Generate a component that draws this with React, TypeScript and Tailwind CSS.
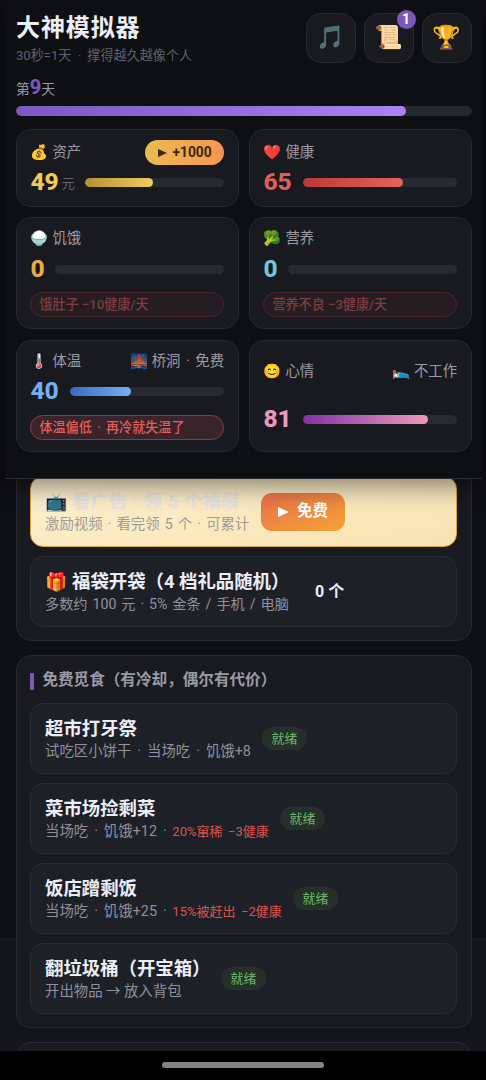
import type { ReactNode } from "react";
import clsx from "clsx";

const headerButtons = [
  { icon: "🎵", badge: 0 },
  { icon: "📜", badge: 1 },
  { icon: "🏆", badge: 0 },
];

const foraging = [
  { name: "超市打牙祭", desc: "试吃区小饼干 · 当场吃 · 饥饿+8", risk: "", width: "w-[207px] [word-spacing:2.4px]" },
  { name: "菜市场捡剩菜", desc: "当场吃 · 饥饿+12 ·", risk: "20%窜稀 −3健康", width: "w-[225px] [word-spacing:2.4px]" },
  { name: "饭店蹭剩饭", desc: "当场吃 · 饥饿+25 ·", risk: "15%被赶出 −2健康", width: "w-[238px] [word-spacing:2.4px]" },
  { name: "翻垃圾桶（开宝箱）", desc: "开出物品 → 放入背包", risk: "", width: "w-[166px]" },
];

function Emoji({ children, className }: { children: ReactNode; className?: string }) {
  return <span className={clsx("inline-block shrink-0 whitespace-nowrap", className)}>{children}</span>;
}

function Label({ icon, text }: { icon: string; text: string }) {
  return (
    <div className="flex items-center whitespace-nowrap text-[14.4px] leading-5 text-[#9a9ba6]">
      <Emoji className="mr-1 w-[18px] text-[14.4px]">{icon}</Emoji>
      {text}
    </div>
  );
}

function Meter({ value, fill }: { value: number; fill: string }) {
  return (
    <div className="h-[9px] flex-1 overflow-hidden rounded-full bg-[#262a33]">
      <div className={clsx("h-full rounded-full", fill)} style={{ width: `${value}%` }} />
    </div>
  );
}

function Warning({ text, active }: { text: string; active?: boolean }) {
  return (
    <div
      className={clsx(
        "flex h-[25px] items-center rounded-full border pl-2 text-[13.1px] font-medium whitespace-pre",
        active
          ? "border-[#8a3d40] bg-[#38242a] text-[#e0605c]"
          : "border-[#4b2529] bg-[#261d23] text-[#7d3d40]"
      )}
    >
      {text}
    </div>
  );
}

function Card({ children, className }: { children?: ReactNode; className?: string }) {
  return (
    <div className={clsx("flex flex-col rounded-[15px] border border-[#292a31] bg-[#191a20] px-[13.4px]", className)}>
      {children}
    </div>
  );
}

function Item({ children, className }: { children: ReactNode; className?: string }) {
  return (
    <div className={clsx("flex h-[71px] items-center gap-[10px] rounded-[13px] border pr-[14px] pl-[13.6px]", className)}>
      {children}
    </div>
  );
}

export default function App() {
  return (
    <div className="flex h-[1080px] w-[486px] flex-col overflow-hidden bg-[linear-gradient(#0e0f13_937px,#14151b_937px)] font-[Roboto,'Noto_Sans_CJK_SC',sans-serif] text-[#eceef5]">
      {/* Status header */}
      <header className="relative z-10 mr-[4px] ml-[5px] h-[479px] shrink-0 border-b border-[#2c2d33] bg-[#0e0f13] pr-[10.5px] pl-[11px] shadow-[0_8px_24px_rgba(0,0,0,0.45)]">
        <div className="flex h-[75px] items-start justify-between">
          <div className="pt-[12px]">
            <h1 className="text-[24px] leading-8 font-bold tracking-[0.9px]">大神模拟器</h1>
            <p className="mt-[2px] text-[13.1px] leading-5 text-[#5f616c] [word-spacing:3px]">30秒=1天 · 撑得越久越像个人</p>
          </div>
          <div className="flex gap-2 pt-[13px]">
            {headerButtons.map((b) => (
              <button
                key={b.icon}
                className="relative flex size-[50px] items-center justify-center rounded-[15px] border border-[#2a2b32] bg-[#191a20] text-[23px]"
              >
                {b.icon}
                {b.badge > 0 && (
                  <span className="absolute -top-[4px] -right-[3px] flex size-[19px] items-center justify-center rounded-full bg-[#7a58bd] text-[14px] font-bold text-white">
                    {b.badge}
                  </span>
                )}
              </button>
            ))}
          </div>
        </div>

        <div className="flex h-[31px] items-baseline text-[13.8px] leading-6 text-[#9a9ba6]">
          第<span className="text-[20px] font-bold text-[#7e5bc4]">9</span>天
        </div>
        <div className="h-[10px] overflow-hidden rounded-full bg-[#25282d]">
          <div className="h-full w-[390px] rounded-full bg-linear-to-r from-[#7c58c0] to-[#a983f1]" />
        </div>

        <div className="mt-[13px] grid grid-cols-2 gap-x-[10.5px] gap-y-[10px]">
          <Card className="h-[78px] pt-[9px]">
            <div className="flex h-[27px] items-center justify-between">
              <Label icon="💰" text="资产" />
              <button className="flex h-[25px] w-[79px] items-center justify-center gap-[6px] rounded-full bg-linear-to-r from-[#e8bd50] to-[#f79351] text-[13.8px] font-bold text-[#3b2709]">
                <svg viewBox="0 0 9 8" className="h-2 w-[9px] fill-current"><path d="M0 0L9 4L0 8Z" /></svg>
                +1000
              </button>
            </div>
            <div className="mt-px flex h-[30px] items-center">
              <span className="text-[24.5px] font-extrabold text-[#f2ca55]">49</span>
              <span className="mt-1 mr-[10px] ml-[3px] text-[13px] text-[#62646e]">元</span>
              <Meter value={49} fill="bg-linear-to-r from-[#b8912f] to-[#efcd5c]" />
            </div>
          </Card>

          <Card className="h-[78px] pt-[9px]">
            <div className="flex h-[27px] items-center">
              <Label icon="❤️" text="健康" />
            </div>
            <div className="mt-px flex h-[30px] items-center gap-[11px]">
              <span className="text-[24.5px] font-extrabold text-[#e05d58]">65</span>
              <Meter value={65} fill="bg-linear-to-r from-[#bd3735] to-[#e3635d]" />
            </div>
          </Card>

          <Card className="h-[112px] pt-[11px]">
            <Label icon="🍚" text="饥饿" />
            <div className="mt-[5px] flex h-[30px] items-center gap-[10px]">
              <span className="text-[24.5px] font-extrabold text-[#efaa46]">0</span>
              <Meter value={0} fill="bg-[#efaa46]" />
            </div>
            <div className="mt-[8px]"><Warning text="饿肚子 −10健康/天" /></div>
          </Card>

          <Card className="h-[112px] pt-[11px]">
            <Label icon="🥦" text="营养" />
            <div className="mt-[5px] flex h-[30px] items-center gap-[10px]">
              <span className="text-[24.5px] font-extrabold text-[#70c7da]">0</span>
              <Meter value={0} fill="bg-[#70c7da]" />
            </div>
            <div className="mt-[8px]"><Warning text="营养不良 −3健康/天" /></div>
          </Card>

          <Card className="mt-px h-[112px] pt-[11px]">
            <div className="flex justify-between [word-spacing:2px]">
              <Label icon="🌡️" text="体温" />
              <Label icon="🌉" text="桥洞 · 免费" />
            </div>
            <div className="mt-[4px] flex h-[30px] items-center gap-[11px]">
              <span className="text-[24.5px] font-extrabold text-[#76aeeb]">40</span>
              <Meter value={40} fill="bg-linear-to-r from-[#386bc6] to-[#75b0f0]" />
            </div>
            <div className="mt-[9px] [word-spacing:2px]"><Warning text="体温偏低 · 再冷就失温了" active /></div>
          </Card>

          <Card className="mt-px h-[112px] pt-[21px]">
            <div className="flex justify-between">
              <Label icon="😊" text="心情" />
              <Label icon="🛌" text="不工作" />
            </div>
            <div className="mt-[22px] flex h-[30px] items-center gap-[11px]">
              <span className="text-[24.5px] font-extrabold text-[#e99abb]">81</span>
              <Meter value={81} fill="bg-linear-to-r from-[#852fa5] to-[#ee98b7]" />
            </div>
          </Card>
        </div>
      </header>

      {/* Scrolled list */}
      <main className="mr-[14.5px] ml-4 -mt-[39px] flex h-[611px] shrink-0 flex-col overflow-hidden">
        <Card className="h-[201px] shrink-0 gap-[9px] pt-[35px]">
          <Item className="border-[#d6a840] bg-linear-to-br from-[#fff2d4] to-[#f8e3af]">
            <div className="w-[206px] whitespace-nowrap">
              <div className="flex items-center pt-px text-[18.4px] leading-6 font-bold text-[#e7e5e4] [word-spacing:1px]">
                <Emoji className="mr-[5px] w-[22px] text-[18px]">📺</Emoji>看广告 · 领 5 个福袋
              </div>
              <div className="text-[14.4px] leading-[21px] text-[#9d9c98] [word-spacing:1.5px]">激励视频 · 看完领 5 个 · 可累计</div>
            </div>
            <button className="flex h-[38px] w-[84px] items-center justify-center gap-2 rounded-[11px] bg-linear-to-br from-[#ec7048] to-[#f2a333] text-[15.5px] font-bold text-white">
              <svg viewBox="0 0 11 10" className="h-[10px] w-[11px] fill-current"><path d="M0 0L11 5L0 10Z" /></svg>
              免费
            </button>
          </Item>
          <Item className="border-[#2a2c34] bg-[#1e2028]">
            <div className="w-[245px] whitespace-nowrap">
              <div className="flex items-center pt-px text-[18.4px] leading-6 font-bold">
                <Emoji className="mr-[5px] w-[22px] text-[18px]">🎁</Emoji>福袋开袋（4 档礼品随机）
              </div>
              <div className="text-[14.2px] leading-[21px] text-[#8f919c] [word-spacing:1.4px]">多数约 100 元 · 5% 金条 / 手机 / 电脑</div>
            </div>
            <span className="ml-[15px] text-[16px] font-bold">0 个</span>
          </Item>
        </Card>

        <Card className="mt-[14px] h-[373px] shrink-0 pt-[15px]">
          <h2 className="mb-[12px] flex h-5 items-center gap-2 text-[15.6px] font-bold whitespace-nowrap text-[#9a9ba6]">
            <span className="h-[17px] w-1 rounded-[1px] bg-[#7b58bc]" />
            免费觅食（有冷却，偶尔有代价）
          </h2>
          <div className="flex flex-col gap-[9px]">
            {foraging.map((f) => (
              <Item key={f.name} className="border-[#2a2c34] bg-[#1e2028]">
                <div className={clsx("pt-[3px] whitespace-nowrap", f.width)}>
                  <div className="text-[18.4px] leading-6 font-bold">{f.name}</div>
                  <div className="text-[14.4px] leading-[22px] text-[#8f919c]">
                    {f.desc}
                    {f.risk && <span className="text-[13px] text-[#d9544f]"> {f.risk}</span>}
                  </div>
                </div>
                <span className="flex h-[23px] w-[45px] items-center justify-center rounded-full bg-[#253029] text-[13px] text-[#6fb56f]">
                  就绪
                </span>
              </Item>
            ))}
          </div>
        </Card>

        <Card className="mt-[14px] h-20 shrink-0" />
      </main>

      {/* System navigation bar */}
      <footer className="flex h-[29px] shrink-0 justify-center bg-black pt-[11px]">
        <div className="h-[6px] w-[162px] rounded-full bg-[#848484]" />
      </footer>
    </div>
  );
}
